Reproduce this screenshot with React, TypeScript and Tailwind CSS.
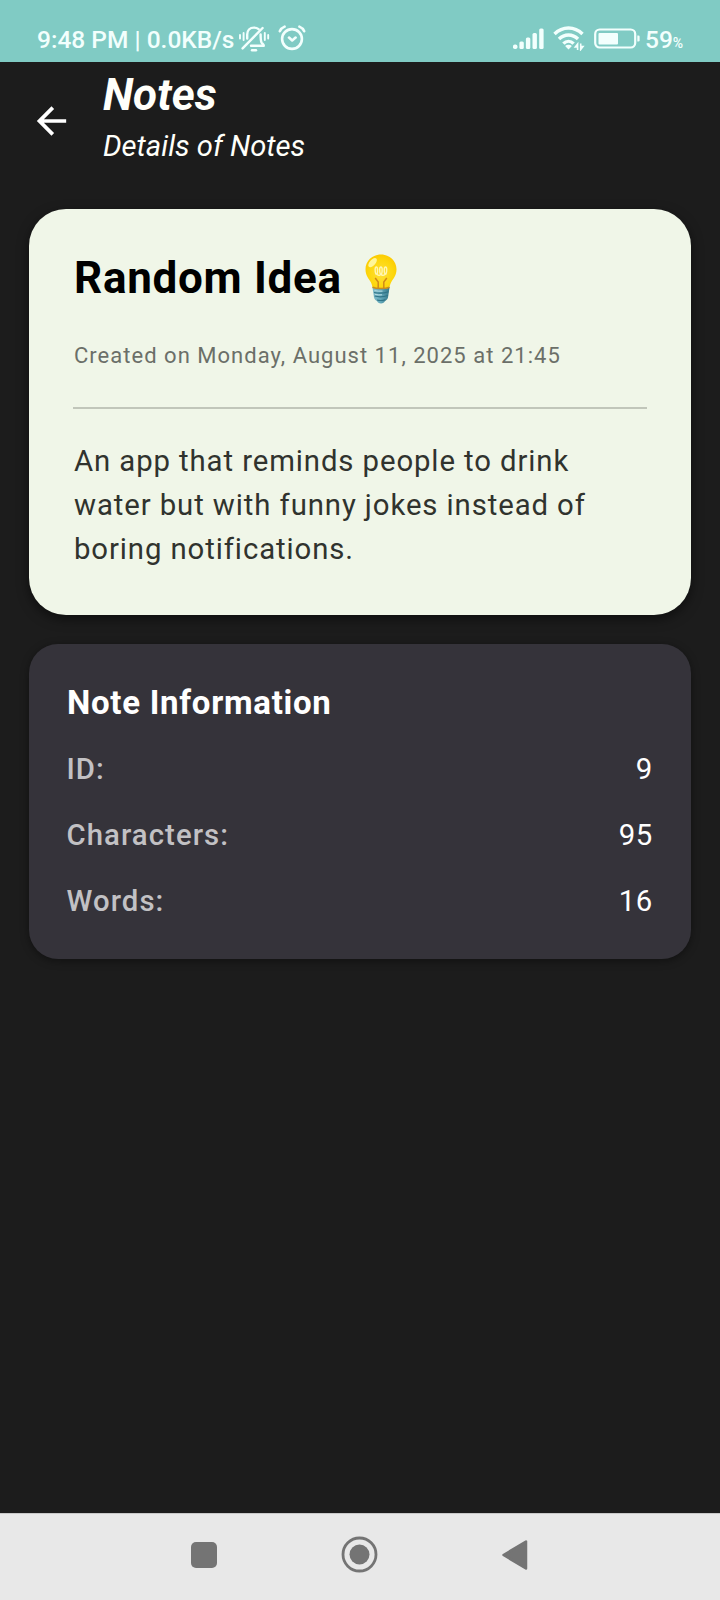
import React from 'react';

const DETAILS = [
  { label: 'ID:', value: '9' },
  { label: 'Characters:', value: '95' },
  { label: 'Words:', value: '16' },
];

function BellOffIcon() {
  return (
    <svg width="32" height="28" viewBox="0 0 32 28" fill="none" stroke="currentColor" strokeWidth="2.4" strokeLinecap="round" strokeLinejoin="round">
      <path d="M20.600 4.200C19.300 3.100 17.800 2.600 16 2.600c-4.200 0-6.800 3-6.800 7v4" />
      <path d="M22.600 9.500c0 3.300 0 6 .9 8 .6 1.200 2.300 1.700 2.300 3.300H13" />
      <path d="M4.600 23.400 24.600 3" />
      <path d="M14 25.200h4" />
      <path d="M2 10v3.500M5.600 8v7M26.800 8v7M30.200 10v3.500" strokeWidth="1.900" />
    </svg>
  );
}

function AlarmIcon() {
  return (
    <svg width="28" height="26" viewBox="0 0 28 26" fill="none" stroke="currentColor" strokeWidth="2.600" strokeLinecap="round" strokeLinejoin="round">
      <circle cx="14" cy="14" r="9.900" />
      <path d="M11 12.600l3.200 2.800 3.400-2.800M1.800 6.200C2.800 4 4.400 2.400 6.600 1.600M26.200 6.200c-1-2.200-2.600-3.800-4.800-4.600" />
    </svg>
  );
}

function SignalIcon() {
  return (
    <svg width="33" height="22" viewBox="0 0 33 22" fill="currentColor">
      <rect x="1" y="16.500" width="4.400" height="4.500" rx="1.800" />
      <rect x="7.400" y="13.500" width="4.400" height="7.500" rx="1.500" />
      <rect x="13.900" y="9.500" width="4.400" height="11.500" rx="1.500" />
      <rect x="20.500" y="5" width="4.400" height="16" rx="1.500" />
      <rect x="27.200" y="0.500" width="4.400" height="20.500" rx="1.500" />
    </svg>
  );
}

function WifiIcon() {
  return (
    <svg width="32" height="26" viewBox="0 0 32 26" fill="none" stroke="currentColor" strokeWidth="3.400">
      <path d="M1.500 9C9.500 1 21.500 1 29.500 9" />
      <path d="M6 14c5.400-5.400 13.600-5.400 19 0" />
      <path d="M10.400 18.600c3-3 7.200-3 10.200 0" />
      <path d="M15.500 24.500l-3.400-3.600c1.900-1.700 4.900-1.700 6.800 0z" fill="currentColor" stroke="none" />
      <path d="M24.600 25v-6l-2.300 3h2.300M27.700 18.500v6l2.300-3h-2.300" strokeWidth="1.600" />
    </svg>
  );
}

function BatteryIcon() {
  return (
    <svg width="46" height="22" viewBox="0 0 46 22">
      <rect x="1.200" y="1.500" width="40" height="18" rx="4.500" fill="none" stroke="currentColor" strokeWidth="2.200" />
      <rect x="4.500" y="5" width="19.500" height="11.500" rx="1" fill="currentColor" />
      <path d="M43.300 7.500h1q1.300 0 1.300 1.300v3.400q0 1.300-1.300 1.300h-1z" fill="currentColor" />
    </svg>
  );
}

function BulbIcon() {
  return (
    <svg width="34" height="52" viewBox="0 0 34 52">
      <defs>
        <radialGradient id="glass" cx="0.5" cy="0.55" r="0.6">
          <stop offset="0" stopColor="#ffe03a" />
          <stop offset="0.65" stopColor="#fdd70d" />
          <stop offset="1" stopColor="#fcc800" />
        </radialGradient>
        <linearGradient id="base" x1="0" x2="1">
          <stop offset="0" stopColor="#82bcc9" />
          <stop offset="0.45" stopColor="#65aabb" />
          <stop offset="1" stopColor="#34788a" />
        </linearGradient>
      </defs>
      <path d="M8.400 34h17.200l-1.600 10.500c-.4 2-2 2.800-3 3.500-.6 1.500-2 2.500-4 2.500s-3.500-1-4-2.500c-1.200-.7-2.600-1.500-3-3.500z" fill="url(#base)" />
      <path d="M17 1.500C8.300 1.500 1.500 8 1.500 16.300c0 6.300 3.300 9.500 5.200 12.700 1.100 2 1.500 4.300 2 5.800 4 1.700 12.600 1.700 16.600 0 .5-1.500.9-3.800 2-5.800 1.900-3.200 5.200-6.400 5.200-12.700C32.500 8 25.700 1.500 17 1.500z" fill="url(#glass)" />
      <path d="M14.200 35.500V29l-3-4M19.800 35.500V29l3-4" fill="none" stroke="#d08a18" strokeWidth="1.500" />
      <path d="M12 21.500c-1.300-3-1.100-7.500.3-7.500s1.700 4.500.7 7.500c1.600 1.200 2.800 1.200 3.500 0-1.300-3-1.100-7.500.4-7.500s1.700 4.500.5 7.500c.8 1.200 2.200 1.200 3.600 0-1.200-3-1-7.500.5-7.500s1.700 4.500.3 7.500" fill="none" stroke="#fff6b4" strokeWidth="1.400" />
      <path d="M8.500 34.300c4 1.700 13 1.700 17 0" fill="none" stroke="#c58c22" strokeWidth="1.500" />
      <ellipse cx="8.600" cy="9.600" rx="5.600" ry="2.900" transform="rotate(-48 8.600 9.600)" fill="#fff69a" />
      <path d="M10 39.500c5 1.200 10 .8 14.500-.8M10.600 43c4.500 1.300 9 .9 13.400-.5M13 47c3 .8 6 .5 8.500-.4" fill="none" stroke="#2f7487" strokeWidth="1.200" />
      <path d="M10.500 37.600c2.500.6 5 .7 8 .5M11 41.400c2.500.6 5 .6 7 .4" fill="none" stroke="#b5dce4" strokeWidth="1" />
    </svg>
  );
}

function StatusBar() {
  return (
    <div className="flex h-[62px] shrink-0 bg-[#80cbc4] pt-[24px] pr-[34px] pl-[37px] text-[#f2fffd]">
      <div className="flex grow items-start">
        <span className="w-[201px] text-[24.500px] leading-[31px] font-medium whitespace-pre">9:48 PM | 0.0KB/s</span>
        <div className="pt-px"><BellOffIcon /></div>
        <div className="w-[8px]" />
        <div className="pt-px"><AlarmIcon /></div>
      </div>
      <div className="flex items-start">
        <div className="pt-[4px]"><SignalIcon /></div>
        <div className="w-[8px]" />
        <div className="pt-px"><WifiIcon /></div>
        <div className="w-[9px]" />
        <div className="pt-[4px]"><BatteryIcon /></div>
        <div className="flex w-[46px] items-baseline pl-[5px] text-[24.500px] leading-[31px] font-medium">
          59<span className="text-[14px] font-medium">%</span>
        </div>
      </div>
    </div>
  );
}

export default function App() {
  return (
    <div className="flex h-[1600px] w-[720px] flex-col overflow-hidden bg-[#1c1c1c] font-[Roboto,'Liberation_Sans',sans-serif]">
      <StatusBar />
      <header className="flex h-[147px] shrink-0 pl-[29px] text-[#fffffa] italic">
        <svg className="mt-[37px]" width="45" height="44" viewBox="0 0 24 24" fill="#ffffff">
          <path d="M20 11H7.830l5.590-5.590L12 4l-8 8 8 8 1.410-1.410L7.830 13H20v-2z" />
        </svg>
        <div className="ml-[29px] pt-[7px]">
          <h1 className="text-[44px] leading-[52px] font-bold">Notes</h1>
          <p className="mt-[3px] text-[29.200px] leading-[44px]">Details of Notes</p>
        </div>
      </header>
      <main className="flex grow flex-col gap-[29px] px-[29px]">
        <section className="h-[406px] rounded-[37px] bg-[#f0f6e8] px-[44px] pt-[43px] shadow-[0_4px_12px_rgba(0,0,0,0.5)]">
          <div className="flex h-[52px] pl-px">
            <h2 className="w-[267px] text-[44px] leading-[52px] font-bold tracking-[0.700px] whitespace-nowrap text-black">Random Idea</h2>
            <div className="ml-[23px] pt-px"><BulbIcon /></div>
          </div>
          <p className="mt-[37px] pl-px text-[22px] leading-[29px] tracking-[1.020px] text-[#6b6f68]">Created on Monday, August 11, 2025 at 21:45</p>
          <div className="mt-[37px] h-[2px] bg-[#c1c6ba]" />
          <p className="mt-[30px] pl-px text-[29.330px] leading-[44px] tracking-[0.900px] text-[#30332e]">
            An app that reminds people to drink<br />water but with funny jokes instead of<br />boring notifications.
          </p>
        </section>
        <section className="flex h-[315px] flex-col rounded-[29px] bg-[#35333a] px-[37px] pt-[37px] shadow-[0_2px_8px_rgba(0,0,0,0.4)]">
          <h3 className="pl-px text-[33px] leading-[44px] font-bold tracking-[0.720px] text-white">Note Information</h3>
          {DETAILS.map((d) => (
            <div key={d.label} className="mt-[22px] flex h-[44px] justify-between pr-px text-[29.330px] leading-[44px]">
              <span className="pl-[0.500px] font-medium tracking-[1.060px] text-[#c2c1c4]">{d.label}</span>
              <span className="tracking-[0.700px] text-white">{d.value}</span>
            </div>
          ))}
        </section>
      </main>
      <nav className="flex h-[87px] shrink-0 items-center border-t border-[#c8c8c8] bg-[#e8e8e8] pb-[5px] pl-[191px]">
        <div className="size-[26px] rounded-[5px] bg-[#747474]" />
        <svg className="ml-[124px]" width="37" height="37" viewBox="0 0 37 37">
          <circle cx="18.500" cy="18.500" r="16.500" fill="none" stroke="#747474" strokeWidth="2.800" />
          <circle cx="18.500" cy="18.500" r="10" fill="#747474" />
        </svg>
        <svg className="ml-[123px]" width="27" height="32" viewBox="0 0 27 32">
          <path d="M2.500 16 25 2.500v27z" fill="#747474" stroke="#747474" strokeWidth="2.500" strokeLinejoin="round" />
        </svg>
      </nav>
    </div>
  );
}
